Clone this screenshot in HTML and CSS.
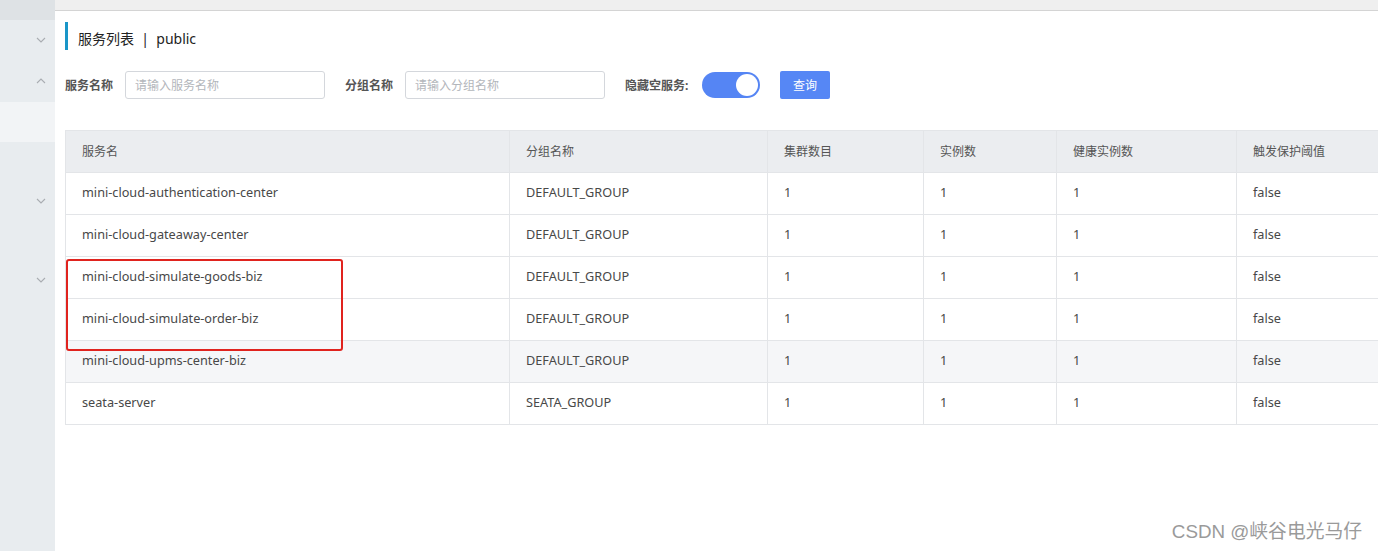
FILE: index.html
```html
<!DOCTYPE html>
<html lang="zh">
<head>
<meta charset="utf-8">
<title>服务列表</title>
<link rel="stylesheet" href="styles.css">
</head>
<body>
<div class="app">
  <aside class="sidebar">
    <div class="sb-top"></div>
    <div class="sb-item sb-h1"><svg class="chev" viewBox="0 0 10 6"><path d="M1 1 L5 5 L9 1" /></svg></div>
    <div class="sb-item sb-h2"><svg class="chev" viewBox="0 0 10 6"><path d="M1 5 L5 1 L9 5" /></svg></div>
    <div class="sb-active"></div>
    <div class="sb-item sb-h3"><svg class="chev" viewBox="0 0 10 6"><path d="M1 1 L5 5 L9 1" /></svg></div>
    <div class="sb-item sb-h4"><svg class="chev" viewBox="0 0 10 6"><path d="M1 1 L5 5 L9 1" /></svg></div>
  </aside>
  <main class="main">
    <div class="topstrip"></div>
    <div class="content">
      <h1 class="title">服务列表 &nbsp;|&nbsp; public</h1>
      <form class="filters">
        <label class="flabel">服务名称</label>
        <input class="finput" placeholder="请输入服务名称">
        <label class="flabel l2">分组名称</label>
        <input class="finput" placeholder="请输入分组名称">
        <label class="flabel l3">隐藏空服务:</label>
        <span class="toggle"><span class="knob"></span></span>
        <button type="button" class="btn">查询</button>
      </form>
      <div class="tablewrap">
        <table class="tbl">
          <colgroup>
            <col class="c1"><col class="c2"><col class="c3"><col class="c4"><col class="c5"><col class="c6">
          </colgroup>
          <thead>
            <tr><th>服务名</th><th>分组名称</th><th>集群数目</th><th>实例数</th><th>健康实例数</th><th>触发保护阈值</th></tr>
          </thead>
          <tbody>
            <tr><td>mini-cloud-authentication-center</td><td>DEFAULT_GROUP</td><td>1</td><td>1</td><td>1</td><td>false</td></tr>
            <tr><td>mini-cloud-gateaway-center</td><td>DEFAULT_GROUP</td><td>1</td><td>1</td><td>1</td><td>false</td></tr>
            <tr><td>mini-cloud-simulate-goods-biz</td><td>DEFAULT_GROUP</td><td>1</td><td>1</td><td>1</td><td>false</td></tr>
            <tr><td>mini-cloud-simulate-order-biz</td><td>DEFAULT_GROUP</td><td>1</td><td>1</td><td>1</td><td>false</td></tr>
            <tr class="hover"><td>mini-cloud-upms-center-biz</td><td>DEFAULT_GROUP</td><td>1</td><td>1</td><td>1</td><td>false</td></tr>
            <tr><td>seata-server</td><td>SEATA_GROUP</td><td>1</td><td>1</td><td>1</td><td>false</td></tr>
          </tbody>
        </table>
        <div class="highlight"></div>
      </div>
    </div>
    <div class="watermark">CSDN @峡谷电光马仔</div>
  </main>
</div>
</body>
</html>
```

FILE: styles.css
```css
* { box-sizing: border-box; }
html, body { margin: 0; padding: 0; height: 100%; overflow: hidden; background: #fff; }
body { font-family: "Noto Sans", "Noto Sans CJK SC", sans-serif; color: #333; }

.app { display: flex; width: 1378px; height: 551px; }

.sidebar { width: 55px; flex: none; background: #e8ecef; display: flex; flex-direction: column; }
.sb-top { height: 20px; background: #dee2e5; }
.sb-item { display: flex; justify-content: flex-end; align-items: center; padding-right: 9px; }
.sb-h1 { height: 40px; }
.sb-h2 { height: 42px; }
.sb-active { height: 40px; background: #f2f4f6; }
.sb-h3 { height: 78px; align-items: flex-end; padding-bottom: 16px; }
.sb-h4 { height: 120px; }
.chev { width: 10px; height: 6px; fill: none; stroke: #a9adb2; stroke-width: 1.1; }

.main { flex: 1; position: relative; overflow: hidden; }
.topstrip { height: 11px; background: #efefef; border-bottom: 1px solid #d4d4d4; }
.content { padding: 11px 0 0 10px; }

.title { margin: 0; height: 28px; border-left: 3px solid #1a96c8; padding-left: 10px; font-size: 14px; font-weight: normal; line-height: 33px; color: #222; }

.filters { display: flex; align-items: center; margin-top: 21px; height: 28px; }
.flabel { font-size: 12px; font-weight: bold; color: #555; width: 60px; flex: none; }
.l2 { margin-left: 20px; }
.l3 { margin-left: 20px; width: 77px; }
.finput { width: 200px; height: 28px; border: 1px solid #d4d7dc; border-radius: 3px; padding: 0 9px; font-size: 12px; font-family: inherit; outline: none; }
.finput::placeholder { color: #b3b6bb; }
.toggle { width: 58px; height: 26px; border-radius: 13px; background: #5585f4; position: relative; flex: none; }
.knob { position: absolute; right: 2px; top: 2px; width: 22px; height: 22px; border-radius: 50%; background: #fff; }
.btn { margin-left: 20px; width: 50px; height: 28px; border: none; border-radius: 2px; background: #5687f5; color: #fff; font-size: 12px; font-family: inherit; padding: 0; }

.tablewrap { position: relative; margin-top: 31px; }
.tbl { border-collapse: collapse; table-layout: fixed; width: 1340px; font-size: 12.7px; }
.c1 { width: 444px; } .c2 { width: 258px; } .c3 { width: 156px; } .c4 { width: 133px; } .c5 { width: 180px; } .c6 { width: 169px; }
.tbl th, .tbl td { border: 1px solid #e3e5e8; height: 42px; padding: 0 16px 3px; text-align: left; white-space: nowrap; color: #484848; }
.tbl th { background: #ebedf0; font-weight: normal; font-size: 12px; color: #555; padding-bottom: 2px; }
.tbl tr.hover td { background: #f5f6f8; }

.highlight { position: absolute; left: 1px; top: 129px; width: 277px; height: 92px; border: 2px solid #e0231e; border-radius: 3px; pointer-events: none; }

.watermark { position: absolute; right: 16px; bottom: 8px; font-size: 18.8px; color: #9a9a9a; font-family: "Liberation Sans", "Noto Sans CJK SC", sans-serif; }
```
